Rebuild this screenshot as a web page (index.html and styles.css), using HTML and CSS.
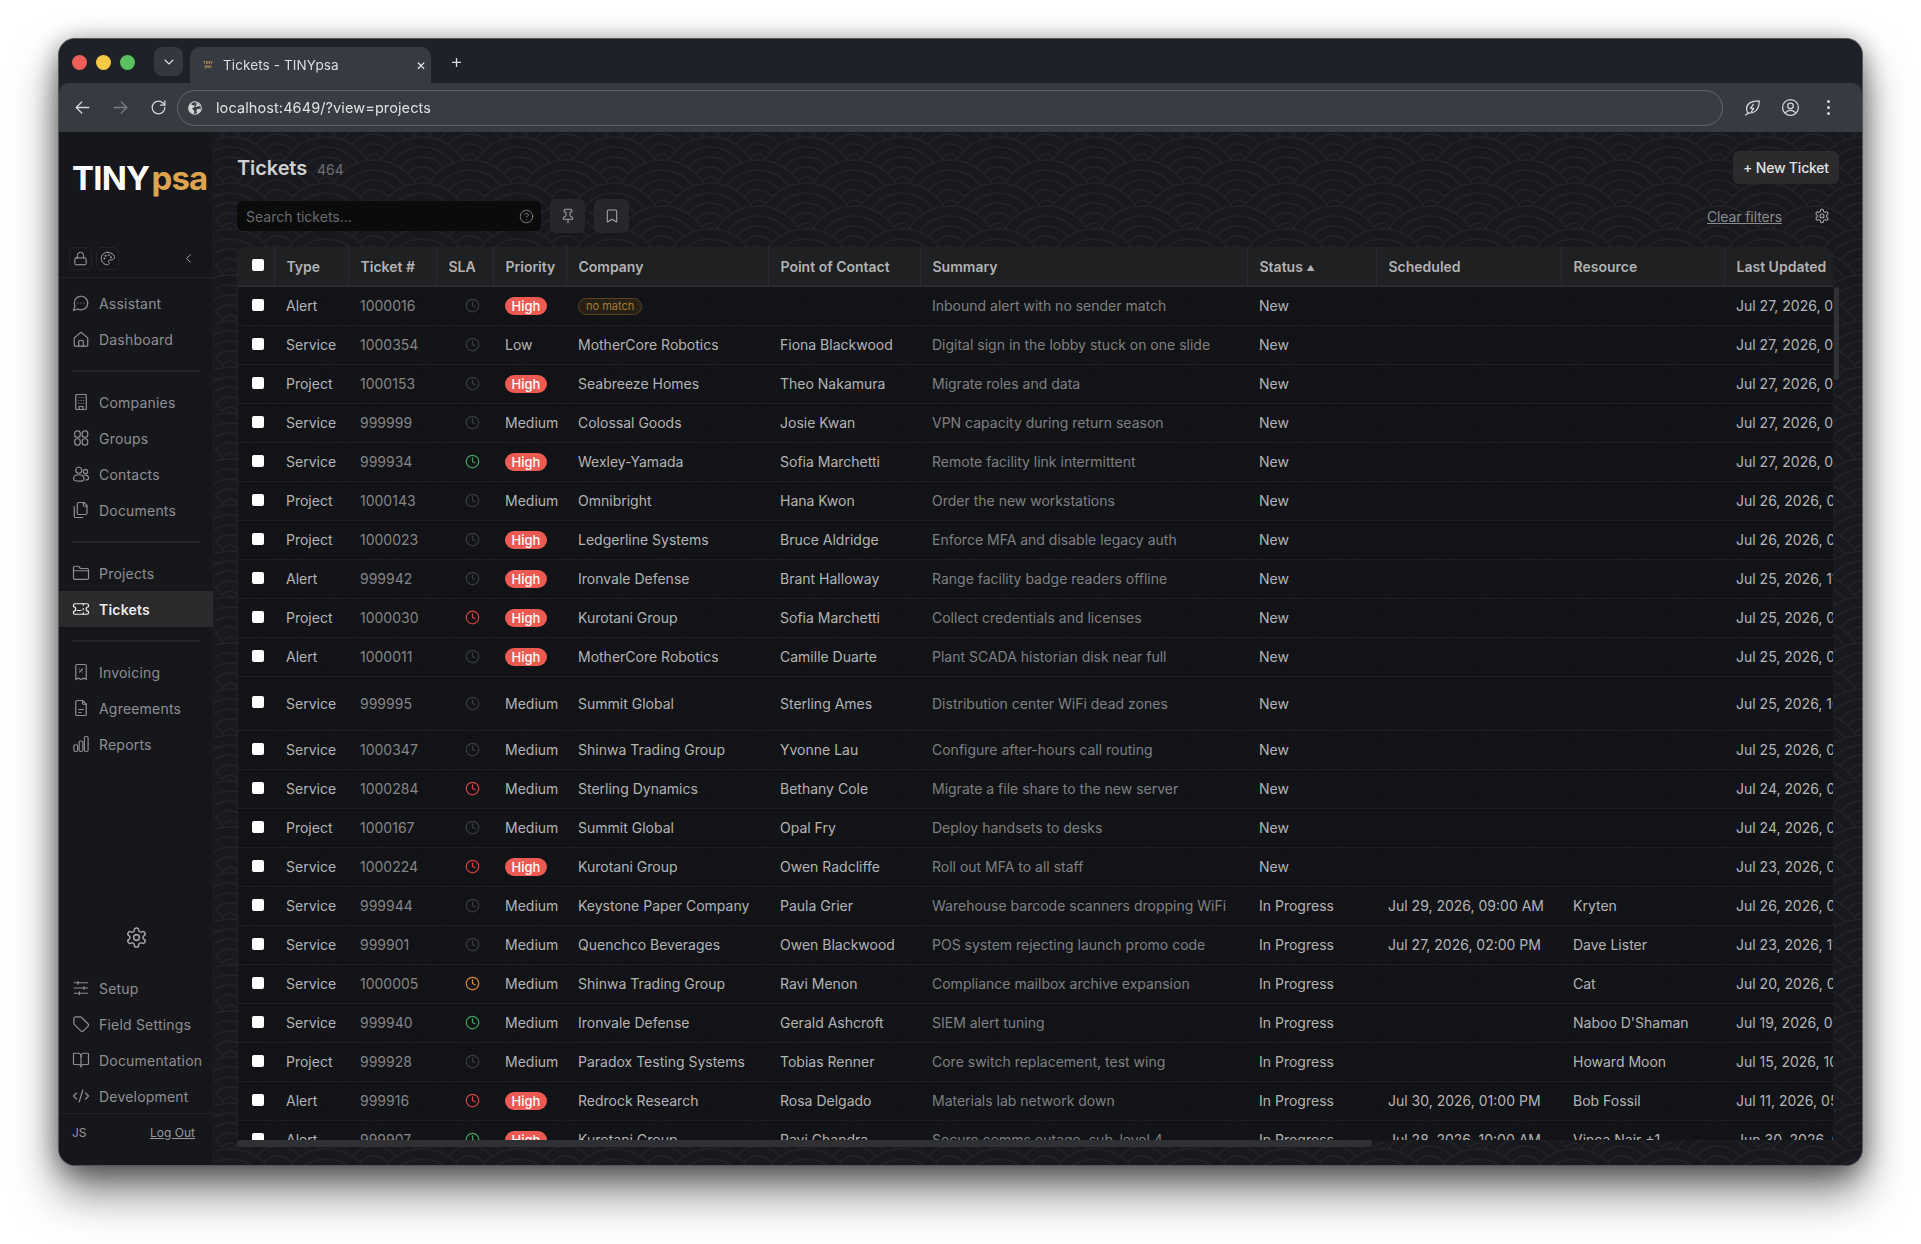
FILE: index.html
```html
<!DOCTYPE html>
<html lang="en">
<head>
<meta charset="utf-8">
<title>Tickets - TINYpsa</title>
<link rel="stylesheet" href="styles.css">
</head>
<body>
<svg class="defs" width="0" height="0" aria-hidden="true">
  <defs>
    <symbol id="i-chat" viewBox="0 0 24 24"><path d="M7.9 20A9 9 0 1 0 4 16.1L2 22Z"/><path d="M8 12h.01M12 12h.01M16 12h.01"/></symbol>
    <symbol id="i-home" viewBox="0 0 24 24"><path d="M3 10.5 12 3l9 7.5V20a1.5 1.5 0 0 1-1.5 1.5h-15A1.5 1.5 0 0 1 3 20z"/><path d="M9 21.5V15a1 1 0 0 1 1-1h4a1 1 0 0 1 1 1v6.5"/></symbol>
    <symbol id="i-building" viewBox="0 0 24 24"><rect x="5" y="2" width="14" height="20" rx="1"/><path d="M9.5 22v-4h5v4M9 6h.01M12 6h.01M15 6h.01M9 10h.01M12 10h.01M15 10h.01M9 14h.01M12 14h.01M15 14h.01"/></symbol>
    <symbol id="i-groups" viewBox="0 0 24 24"><rect x="3.5" y="2.5" width="7.5" height="8.5" rx="3.5"/><rect x="13.5" y="2.5" width="7.5" height="8.5" rx="3.5"/><rect x="3.5" y="13" width="7.5" height="8.5" rx="3.5"/><rect x="13.5" y="13" width="7.5" height="8.5" rx="3.5"/></symbol>
    <symbol id="i-users" viewBox="0 0 24 24"><circle cx="9" cy="7" r="4"/><circle cx="18" cy="8.5" r="2.8"/><path d="M2 18.5c0-3.5 3-5.5 7-5.5s7 2 7 5.5c0 2-3 3-7 3s-7-1-7-3z"/><path d="M16.5 13.5c3 0 5.5 1.3 5.5 4 0 1.4-1.5 2.3-3.8 2.5"/></symbol>
    <symbol id="i-files" viewBox="0 0 24 24"><path d="M20 7h-3a2 2 0 0 1-2-2V2"/><path d="M9 18a2 2 0 0 1-2-2V4a2 2 0 0 1 2-2h7l4 4v10a2 2 0 0 1-2 2Z"/><path d="M3 7.6v12.8A1.6 1.6 0 0 0 4.6 22h9.8"/></symbol>
    <symbol id="i-folder" viewBox="0 0 24 24"><path d="M20 20.5a2 2 0 0 0 2-2V8a2 2 0 0 0-2-2h-7.9a2 2 0 0 1-1.69-.9L9.6 3.9A2 2 0 0 0 7.93 3H4a2 2 0 0 0-2 2v13.5a2 2 0 0 0 2 2Z"/><path d="M2 9h20"/></symbol>
    <symbol id="i-ticket" viewBox="0 0 24 24"><path d="M2 9a3 3 0 0 1 0 6v2a2 2 0 0 0 2 2h16a2 2 0 0 0 2-2v-2a3 3 0 0 1 0-6V7a2 2 0 0 0-2-2H4a2 2 0 0 0-2 2Z"/><path d="M15 5v2M15 17v2M15 11v2M7 14h5"/></symbol>
    <symbol id="i-receipt" viewBox="0 0 24 24"><path d="M5 4a2 2 0 0 1 2-2h10a2 2 0 0 1 2 2v18l-3.5-1.8L12 22l-3.500-1.800L5 22z"/><path d="m10 12 4-4M10 8h.01M14 12h.01"/></symbol>
    <symbol id="i-file" viewBox="0 0 24 24"><path d="M14 2H6.500A1.500 1.500 0 0 0 5 3.500v17A1.500 1.500 0 0 0 6.500 22h11a1.500 1.500 0 0 0 1.500-1.500V7Z"/><path d="M14 2v3.500A1.500 1.500 0 0 0 15.500 7H19M9 14h6M9 18h3"/></symbol>
    <symbol id="i-bars" viewBox="0 0 24 24"><rect x="2.500" y="13" width="5" height="9" rx="2"/><rect x="9.500" y="8" width="5" height="14" rx="2"/><rect x="16.500" y="2" width="5" height="20" rx="2"/></symbol>
    <symbol id="i-gear" viewBox="0 0 24 24"><path d="M12.220 2h-.44a2 2 0 0 0-2 2v.18a2 2 0 0 1-1 1.730l-.43.25a2 2 0 0 1-2 0l-.15-.08a2 2 0 0 0-2.730.73l-.22.38a2 2 0 0 0 .73 2.730l.15.1a2 2 0 0 1 1 1.720v.51a2 2 0 0 1-1 1.740l-.15.09a2 2 0 0 0-.73 2.730l.22.38a2 2 0 0 0 2.730.73l.15-.08a2 2 0 0 1 2 0l.43.25a2 2 0 0 1 1 1.730V20a2 2 0 0 0 2 2h.44a2 2 0 0 0 2-2v-.18a2 2 0 0 1 1-1.730l.43-.25a2 2 0 0 1 2 0l.15.08a2 2 0 0 0 2.730-.73l.22-.39a2 2 0 0 0-.73-2.730l-.15-.08a2 2 0 0 1-1-1.740v-.5a2 2 0 0 1 1-1.740l.15-.09a2 2 0 0 0 .73-2.730l-.22-.38a2 2 0 0 0-2.730-.73l-.15.08a2 2 0 0 1-2 0l-.43-.25a2 2 0 0 1-1-1.730V4a2 2 0 0 0-2-2z"/><circle cx="12" cy="12" r="3"/></symbol>
    <symbol id="i-sliders" viewBox="0 0 24 24"><path d="M3 5h18M3 12h18M3 19h18M8 3v4M16 10v4M10 17v4"/></symbol>
    <symbol id="i-tag" viewBox="0 0 24 24"><path d="M11 2.500H5A2.500 2.500 0 0 0 2.500 5v6c0 .7.3 1.300.8 1.800l8.400 8.400a2.500 2.500 0 0 0 3.500 0l6-6a2.500 2.500 0 0 0 0-3.500l-8.400-8.400a2.500 2.500 0 0 0-1.800-.8z"/></symbol>
    <symbol id="i-book" viewBox="0 0 24 24"><path d="M12 7v14"/><path d="M3 18a1 1 0 0 1-1-1V4a1 1 0 0 1 1-1h5a4 4 0 0 1 4 4 4 4 0 0 1 4-4h5a1 1 0 0 1 1 1v13a1 1 0 0 1-1 1h-6a3 3 0 0 0-3 3 3 3 0 0 0-3-3z"/></symbol>
    <symbol id="i-code" viewBox="0 0 24 24"><path d="m18 16 4-4-4-4M6 8l-4 4 4 4M14.500 4l-5 16"/></symbol>
    <symbol id="i-lock" viewBox="0 0 24 24"><rect x="3" y="11" width="18" height="11" rx="2"/><path d="M7 11V7a5 5 0 0 1 10 0v4"/></symbol>
    <symbol id="i-palette" viewBox="0 0 24 24"><path d="M12 2C6.500 2 2 6.500 2 12s4.500 10 10 10c1.500 0 2.500-1 2.500-2.300 0-.6-.2-1.100-.6-1.600-.4-.5-.6-1-.6-1.600 0-1.300 1-2.200 2.300-2.200h2.300c3 0 5.600-2.500 5.600-5.500C22 5.900 17.500 2 12 2z"/><path d="M7 12h.01M9 7.500h.01M14 6.500h.01M17.500 10h.01" stroke-width="3"/></symbol>
    <symbol id="i-left" viewBox="0 0 24 24"><path d="m15 18-6-6 6-6"/></symbol>
    <symbol id="i-pin" viewBox="0 0 24 24"><path d="M12 17v5"/><path d="M9 10.760a2 2 0 0 1-1.110 1.790l-1.780.9A2 2 0 0 0 5 15.240V16a1 1 0 0 0 1 1h12a1 1 0 0 0 1-1v-.76a2 2 0 0 0-1.110-1.790l-1.780-.9A2 2 0 0 1 15 10.760V7a1 1 0 0 1 1-1 2 2 0 0 0 0-4H8a2 2 0 0 0 0 4 1 1 0 0 1 1 1z"/></symbol>
    <symbol id="i-bookmark" viewBox="0 0 24 24"><path d="m19 21-7-4-7 4V5a2 2 0 0 1 2-2h10a2 2 0 0 1 2 2v16z"/></symbol>
    <symbol id="i-help" viewBox="0 0 24 24"><circle cx="12" cy="12" r="10"/><path d="M9.090 9a3 3 0 0 1 5.830 1c0 2-3 3-3 3M12 17h.01"/></symbol>
    <symbol id="i-clock" viewBox="0 0 24 24"><circle cx="12" cy="12" r="10"/><path d="M12 6v6l4 2"/></symbol>
    <symbol id="i-back" viewBox="0 0 24 24"><path d="m11 19-7-7 7-7M4 12h16"/></symbol>
    <symbol id="i-fwd" viewBox="0 0 24 24"><path d="m13 5 7 7-7 7M20 12H4"/></symbol>
    <symbol id="i-reload" viewBox="0 0 24 24"><path d="M20 12a8 8 0 1 1-8-8c2.300 0 4.400 1 6 2.600L20 9"/><path d="M20 3.500V9h-5.500"/></symbol>
    <symbol id="i-down" viewBox="0 0 24 24"><path d="m6 9 6 6 6-6"/></symbol>
    <symbol id="i-globe" viewBox="0 0 24 24"><circle cx="12" cy="12" r="9.500"/><path class="solid" d="M5 6c2 .5 3 2 5 2s2 2 1 3-3 0-3 2 3 2 3 4-.5 3-1.500 3.500C6 19 3 16 3 12c0-2.500.8-4.500 2-6zM14 4c2 .5 5 2.500 6 5-1.500 1-3 0-4 .5s-2 2-3 .5 1.500-2 1.500-3-1-1-.5-3zM15 14c1.500-.8 4-1 5.500-.5-.5 3-2.500 5.500-5 6.500-1-1-2-4.500-.5-6z"/></symbol>
    <symbol id="i-leaf" viewBox="0 0 24 24"><path d="M20.500 3.500C13 3.500 5 5 4.500 13c-.2 2.500.7 4.500 2 6 8 .5 14-3.500 14-15.500z"/><path d="M6.500 19 3.500 21.500M13 8l-3.500 5h4L10.500 17.500"/></symbol>
    <symbol id="i-user" viewBox="0 0 24 24"><circle cx="12" cy="12" r="10"/><circle cx="12" cy="10" r="3.500"/><path d="M5.500 19.500c1-2.500 3.500-4 6.500-4s5.500 1.500 6.500 4"/></symbol>
  </defs>
</svg>

<div class="window">
  <div class="tabbar">
    <div class="lights"><span class="light red"></span><span class="light yellow"></span><span class="light green"></span></div>
    <div class="tab-menu"><svg class="ico ico-16"><use href="#i-down"/></svg></div>
    <div class="tab">
      <span class="favicon">TINY<br>psa</span>
      <span class="tab-title">Tickets - TINYpsa</span>
      <span class="tab-close">✕</span>
    </div>
    <span class="tab-new">+</span>
  </div>
  <div class="toolbar">
    <svg class="ico nav-arrow"><use href="#i-back"/></svg>
    <svg class="ico nav-arrow dim"><use href="#i-fwd"/></svg>
    <svg class="ico nav-arrow"><use href="#i-reload"/></svg>
    <div class="omnibox">
      <svg class="ico ico-16"><use href="#i-globe"/></svg>
      <span class="url">localhost:4649/?view=projects</span>
    </div>
    <svg class="ico chrome-ico"><use href="#i-leaf"/></svg>
    <svg class="ico chrome-ico"><use href="#i-user"/></svg>
    <span class="dots"><i></i><i></i><i></i></span>
  </div>

  <div class="app">
    <aside class="sidebar">
      <div class="logo"><span class="logo-a">TINY</span><span class="logo-b">psa</span></div>
      <div class="side-tools">
        <span class="tool-btn"><svg class="ico ico-14"><use href="#i-lock"/></svg></span>
        <span class="tool-btn"><svg class="ico ico-14"><use href="#i-palette"/></svg></span>
        <svg class="ico ico-14 collapse"><use href="#i-left"/></svg>
      </div>
      <nav class="nav nav-first">
        <a class="nav-item"><svg class="ico"><use href="#i-chat"/></svg>Assistant</a>
        <a class="nav-item"><svg class="ico"><use href="#i-home"/></svg>Dashboard</a>
      </nav>
      <hr class="nav-rule">
      <nav class="nav">
        <a class="nav-item"><svg class="ico"><use href="#i-building"/></svg>Companies</a>
        <a class="nav-item"><svg class="ico"><use href="#i-groups"/></svg>Groups</a>
        <a class="nav-item"><svg class="ico"><use href="#i-users"/></svg>Contacts</a>
        <a class="nav-item"><svg class="ico"><use href="#i-files"/></svg>Documents</a>
      </nav>
      <hr class="nav-rule">
      <nav class="nav">
        <a class="nav-item"><svg class="ico"><use href="#i-folder"/></svg>Projects</a>
        <a class="nav-item active"><svg class="ico"><use href="#i-ticket"/></svg>Tickets</a>
      </nav>
      <hr class="nav-rule">
      <nav class="nav">
        <a class="nav-item"><svg class="ico"><use href="#i-receipt"/></svg>Invoicing</a>
        <a class="nav-item"><svg class="ico"><use href="#i-file"/></svg>Agreements</a>
        <a class="nav-item"><svg class="ico"><use href="#i-bars"/></svg>Reports</a>
      </nav>
      <div class="side-gear"><svg class="ico ico-22"><use href="#i-gear"/></svg></div>
      <nav class="nav">
        <a class="nav-item"><svg class="ico"><use href="#i-sliders"/></svg>Setup</a>
        <a class="nav-item"><svg class="ico"><use href="#i-tag"/></svg>Field Settings</a>
        <a class="nav-item"><svg class="ico"><use href="#i-book"/></svg>Documentation</a>
        <a class="nav-item"><svg class="ico"><use href="#i-code"/></svg>Development</a>
      </nav>
      <div class="side-foot"><span>JS</span><a class="logout">Log Out</a></div>
    </aside>

    <main class="main">
      <svg class="pattern" aria-hidden="true">
        <defs>
          <g id="scale" class="scale">
            <circle r="48"/><circle r="38"/><circle r="28"/><circle r="18"/><circle r="8"/>
          </g>
          <pattern id="waves" width="96" height="46" patternUnits="userSpaceOnUse" patternTransform="translate(16 7)">
            <use href="#scale" x="0" y="0"/><use href="#scale" x="96" y="0"/>
            <use href="#scale" x="48" y="23"/>
            <use href="#scale" x="0" y="46"/><use href="#scale" x="96" y="46"/>
            <use href="#scale" x="48" y="69"/>
            <use href="#scale" x="0" y="92"/><use href="#scale" x="96" y="92"/>
          </pattern>
        </defs>
        <rect width="100%" height="100%" fill="url(#waves)"/>
      </svg>

      <div class="content">
        <header class="head">
          <div class="head-title"><h1>Tickets</h1><span class="count">464</span></div>
          <button class="new-btn">+ New Ticket</button>
        </header>
        <div class="filters">
          <div class="search">
            <span class="placeholder">Search tickets...</span>
            <svg class="ico ico-15"><use href="#i-help"/></svg>
          </div>
          <span class="icon-btn"><svg class="ico ico-16"><use href="#i-pin"/></svg></span>
          <span class="icon-btn"><svg class="ico ico-16"><use href="#i-bookmark"/></svg></span>
          <a class="clear">Clear filters</a>
          <svg class="ico ico-16 filter-gear"><use href="#i-gear"/></svg>
        </div>

        <div class="table-area">
          <div class="table-clip">
            <table class="grid">
              <colgroup>
                <col class="c-check"><col class="c-type"><col class="c-num"><col class="c-sla"><col class="c-pri"><col class="c-co"><col class="c-poc"><col class="c-sum"><col class="c-st"><col class="c-sch"><col class="c-res"><col class="c-upd">
              </colgroup>
              <thead>
                <tr>
                  <th class="check"><input type="checkbox" class="cb"></th><th>Type</th><th>Ticket #</th><th>SLA</th><th>Priority</th><th>Company</th><th>Point of Contact</th><th>Summary</th><th>Status <span class="sort">▲</span></th><th>Scheduled</th><th>Resource</th><th>Last Updated</th>
                </tr>
              </thead>
              <tbody>
                <tr><td class="check"><input type="checkbox" class="cb"></td><td>Alert</td><td class="num">1000016</td><td class="sla"><svg class="ico clock"><use href="#i-clock"/></svg></td><td><span class="high">High</span></td><td><span class="nomatch">no match</span></td><td></td><td class="sum">Inbound alert with no sender match</td><td>New</td><td></td><td></td><td>Jul 27, 2026, 09:41 AM</td></tr>
                <tr><td class="check"><input type="checkbox" class="cb"></td><td>Service</td><td class="num">1000354</td><td class="sla"><svg class="ico clock"><use href="#i-clock"/></svg></td><td>Low</td><td>MotherCore Robotics</td><td>Fiona Blackwood</td><td class="sum">Digital sign in the lobby stuck on one slide</td><td>New</td><td></td><td></td><td>Jul 27, 2026, 06:12 AM</td></tr>
                <tr><td class="check"><input type="checkbox" class="cb"></td><td>Project</td><td class="num">1000153</td><td class="sla"><svg class="ico clock"><use href="#i-clock"/></svg></td><td><span class="high">High</span></td><td>Seabreeze Homes</td><td>Theo Nakamura</td><td class="sum">Migrate roles and data</td><td>New</td><td></td><td></td><td>Jul 27, 2026, 06:08 AM</td></tr>
                <tr><td class="check"><input type="checkbox" class="cb"></td><td>Service</td><td class="num">999999</td><td class="sla"><svg class="ico clock"><use href="#i-clock"/></svg></td><td>Medium</td><td>Colossal Goods</td><td>Josie Kwan</td><td class="sum">VPN capacity during return season</td><td>New</td><td></td><td></td><td>Jul 27, 2026, 06:02 AM</td></tr>
                <tr><td class="check"><input type="checkbox" class="cb"></td><td>Service</td><td class="num">999934</td><td class="sla"><svg class="ico clock ok"><use href="#i-clock"/></svg></td><td><span class="high">High</span></td><td>Wexley-Yamada</td><td>Sofia Marchetti</td><td class="sum">Remote facility link intermittent</td><td>New</td><td></td><td></td><td>Jul 27, 2026, 06:00 AM</td></tr>
                <tr><td class="check"><input type="checkbox" class="cb"></td><td>Project</td><td class="num">1000143</td><td class="sla"><svg class="ico clock"><use href="#i-clock"/></svg></td><td>Medium</td><td>Omnibright</td><td>Hana Kwon</td><td class="sum">Order the new workstations</td><td>New</td><td></td><td></td><td>Jul 26, 2026, 03:30 PM</td></tr>
                <tr><td class="check"><input type="checkbox" class="cb"></td><td>Project</td><td class="num">1000023</td><td class="sla"><svg class="ico clock"><use href="#i-clock"/></svg></td><td><span class="high">High</span></td><td>Ledgerline Systems</td><td>Bruce Aldridge</td><td class="sum">Enforce MFA and disable legacy auth</td><td>New</td><td></td><td></td><td>Jul 26, 2026, 09:15 AM</td></tr>
                <tr><td class="check"><input type="checkbox" class="cb"></td><td>Alert</td><td class="num">999942</td><td class="sla"><svg class="ico clock"><use href="#i-clock"/></svg></td><td><span class="high">High</span></td><td>Ironvale Defense</td><td>Brant Halloway</td><td class="sum">Range facility badge readers offline</td><td>New</td><td></td><td></td><td>Jul 25, 2026, 11:04 PM</td></tr>
                <tr><td class="check"><input type="checkbox" class="cb"></td><td>Project</td><td class="num">1000030</td><td class="sla"><svg class="ico clock bad"><use href="#i-clock"/></svg></td><td><span class="high">High</span></td><td>Kurotani Group</td><td>Sofia Marchetti</td><td class="sum">Collect credentials and licenses</td><td>New</td><td></td><td></td><td>Jul 25, 2026, 07:22 PM</td></tr>
                <tr><td class="check"><input type="checkbox" class="cb"></td><td>Alert</td><td class="num">1000011</td><td class="sla"><svg class="ico clock"><use href="#i-clock"/></svg></td><td><span class="high">High</span></td><td>MotherCore Robotics</td><td>Camille Duarte</td><td class="sum">Plant SCADA historian disk near full</td><td>New</td><td></td><td></td><td>Jul 25, 2026, 03:47 PM</td></tr>
                <tr class="tall"><td class="check"><input type="checkbox" class="cb"></td><td>Service</td><td class="num">999995</td><td class="sla"><svg class="ico clock"><use href="#i-clock"/></svg></td><td>Medium</td><td>Summit Global</td><td>Sterling Ames</td><td class="sum">Distribution center WiFi dead zones</td><td>New</td><td></td><td></td><td>Jul 25, 2026, 10:18 AM</td></tr>
                <tr><td class="check"><input type="checkbox" class="cb"></td><td>Service</td><td class="num">1000347</td><td class="sla"><svg class="ico clock"><use href="#i-clock"/></svg></td><td>Medium</td><td>Shinwa Trading Group</td><td>Yvonne Lau</td><td class="sum">Configure after-hours call routing</td><td>New</td><td></td><td></td><td>Jul 25, 2026, 04:09 AM</td></tr>
                <tr><td class="check"><input type="checkbox" class="cb"></td><td>Service</td><td class="num">1000284</td><td class="sla"><svg class="ico clock bad"><use href="#i-clock"/></svg></td><td>Medium</td><td>Sterling Dynamics</td><td>Bethany Cole</td><td class="sum">Migrate a file share to the new server</td><td>New</td><td></td><td></td><td>Jul 24, 2026, 06:33 PM</td></tr>
                <tr><td class="check"><input type="checkbox" class="cb"></td><td>Project</td><td class="num">1000167</td><td class="sla"><svg class="ico clock"><use href="#i-clock"/></svg></td><td>Medium</td><td>Summit Global</td><td>Opal Fry</td><td class="sum">Deploy handsets to desks</td><td>New</td><td></td><td></td><td>Jul 24, 2026, 01:51 PM</td></tr>
                <tr><td class="check"><input type="checkbox" class="cb"></td><td>Service</td><td class="num">1000224</td><td class="sla"><svg class="ico clock bad"><use href="#i-clock"/></svg></td><td><span class="high">High</span></td><td>Kurotani Group</td><td>Owen Radcliffe</td><td class="sum">Roll out MFA to all staff</td><td>New</td><td></td><td></td><td>Jul 23, 2026, 07:26 AM</td></tr>
                <tr><td class="check"><input type="checkbox" class="cb"></td><td>Service</td><td class="num">999944</td><td class="sla"><svg class="ico clock"><use href="#i-clock"/></svg></td><td>Medium</td><td>Keystone Paper Company</td><td>Paula Grier</td><td class="sum">Warehouse barcode scanners dropping WiFi</td><td>In Progress</td><td>Jul 29, 2026, 09:00 AM</td><td>Kryten</td><td>Jul 26, 2026, 05:14 PM</td></tr>
                <tr><td class="check"><input type="checkbox" class="cb"></td><td>Service</td><td class="num">999901</td><td class="sla"><svg class="ico clock"><use href="#i-clock"/></svg></td><td>Medium</td><td>Quenchco Beverages</td><td>Owen Blackwood</td><td class="sum">POS system rejecting launch promo code</td><td>In Progress</td><td>Jul 27, 2026, 02:00 PM</td><td>Dave Lister</td><td>Jul 23, 2026, 11:29 AM</td></tr>
                <tr><td class="check"><input type="checkbox" class="cb"></td><td>Service</td><td class="num">1000005</td><td class="sla"><svg class="ico clock warn"><use href="#i-clock"/></svg></td><td>Medium</td><td>Shinwa Trading Group</td><td>Ravi Menon</td><td class="sum">Compliance mailbox archive expansion</td><td>In Progress</td><td></td><td>Cat</td><td>Jul 20, 2026, 01:37 PM</td></tr>
                <tr><td class="check"><input type="checkbox" class="cb"></td><td>Service</td><td class="num">999940</td><td class="sla"><svg class="ico clock ok"><use href="#i-clock"/></svg></td><td>Medium</td><td>Ironvale Defense</td><td>Gerald Ashcroft</td><td class="sum">SIEM alert tuning</td><td>In Progress</td><td></td><td>Naboo D'Shaman</td><td>Jul 19, 2026, 06:05 PM</td></tr>
                <tr><td class="check"><input type="checkbox" class="cb"></td><td>Project</td><td class="num">999928</td><td class="sla"><svg class="ico clock"><use href="#i-clock"/></svg></td><td>Medium</td><td>Paradox Testing Systems</td><td>Tobias Renner</td><td class="sum">Core switch replacement, test wing</td><td>In Progress</td><td></td><td>Howard Moon</td><td>Jul 15, 2026, 10:52 AM</td></tr>
                <tr><td class="check"><input type="checkbox" class="cb"></td><td>Alert</td><td class="num">999916</td><td class="sla"><svg class="ico clock bad"><use href="#i-clock"/></svg></td><td><span class="high">High</span></td><td>Redrock Research</td><td>Rosa Delgado</td><td class="sum">Materials lab network down</td><td>In Progress</td><td>Jul 30, 2026, 01:00 PM</td><td>Bob Fossil</td><td>Jul 11, 2026, 05:17 PM</td></tr>
                <tr><td class="check"><input type="checkbox" class="cb"></td><td>Alert</td><td class="num">999907</td><td class="sla"><svg class="ico clock ok"><use href="#i-clock"/></svg></td><td><span class="high">High</span></td><td>Kurotani Group</td><td>Ravi Chandra</td><td class="sum">Secure comms outage, sub-level 4</td><td>In Progress</td><td>Jul 28, 2026, 10:00 AM</td><td>Vinca Nair +1</td><td>Jun 30, 2026, 02:44 PM</td></tr>
              </tbody>
            </table>
          </div>
          <span class="vthumb"></span>
          <span class="hthumb"></span>
        </div>
      </div>
    </main>
  </div>
</div>
</body>
</html>
```

FILE: styles.css
```css
* { box-sizing: border-box; }
html, body { margin: 0; height: 1244px; overflow: hidden; background: #fff; }
body { padding: 39px 59px 0; font-family: Inter, "Liberation Sans", sans-serif; font-size: 14px; }
.defs { position: absolute; }

.ico { width: 18px; height: 18px; fill: none; stroke: currentColor; stroke-width: 1.6; stroke-linecap: round; stroke-linejoin: round; flex: none; display: block; }
.ico-14 { width: 15px; height: 15px; }
.ico-15 { width: 15px; height: 15px; }
.ico-16 { width: 16px; height: 16px; }
.ico-22 { width: 23px; height: 23px; }
.solid { fill: currentColor; stroke: none; }

.window {
  width: 1803px; height: 1126px; border-radius: 16px; overflow: hidden;
  display: flex; flex-direction: column; background: #1e2128;
  box-shadow: 0 0 0 1px #55565a, 0 26px 46px rgba(0,0,0,.55), 0 4px 26px rgba(0,0,0,.45);
  filter: blur(.45px);
}

/* browser chrome */
.tabbar { height: 44px; display: flex; align-items: flex-end; padding-left: 13px; background: #1e2128; color: #dcdde0; flex: none; }
.lights { display: flex; gap: 9px; align-self: flex-start; margin-top: 15.5px; }
.light { width: 15px; height: 15px; border-radius: 50%; }
.red { background: #ee5f5b; }
.yellow { background: #f6c944; }
.green { background: #5cc261; }
.tab-menu { width: 29px; height: 29px; margin: 0 7px 7px 19px; border-radius: 8px; background: #34373e; display: flex; align-items: center; justify-content: center; align-self: flex-end; color: #d5dcf0; }
.tab { width: 241px; height: 36px; background: #383a41; border-radius: 10px 10px 0 0; display: flex; align-items: center; padding: 0 0 0 12px; margin-bottom: 0; font-size: 13.5px; }
.favicon { width: 12px; font-size: 4px; line-height: 4px; color: #b89455; font-weight: 700; text-align: center; margin-right: 9px; }
.tab-title { flex: 1; letter-spacing: .1px; }
.tab-close { font-size: 12px; margin-right: 5px; color: #e6e7ea; }
.tab-new { font-size: 20px; font-weight: 300; margin: 0 0 9px 19px; line-height: 26px; }

.toolbar { height: 49px; background: #383a41; display: flex; align-items: center; color: #d5d6d9; flex: none; border-radius: 10px 10px 0 0; }
.nav-arrow { width: 19px; height: 19px; margin-left: 14px; margin-right: 5px; }
.nav-arrow.dim { color: #7a7c81; margin-left: 14px; }
.nav-arrow + .nav-arrow + .nav-arrow { margin-left: 14px; margin-right: 4px; }
.omnibox { width: 1546px; height: 36px; border: 1px solid #66676b; border-radius: 18px; margin-left: 5px; background: #3a3c43; display: flex; align-items: center; padding-left: 9px; }
.url { margin-left: 13px; font-size: 14.5px; color: #dfe0e3; letter-spacing: .1px; }
.chrome-ico { width: 19px; height: 19px; margin-left: 19px; }
.omnibox + .chrome-ico { margin-left: 20px; }
.dots { display: flex; flex-direction: column; gap: 3px; margin-left: 27px; }
.dots i { width: 3px; height: 3px; border-radius: 50%; background: #d5d6d9; display: block; }

/* app */
.app { flex: 1; display: flex; min-height: 0; }
.sidebar { width: 155px; background: #16171b; border-right: 1px solid #1d1e22; display: flex; flex-direction: column; color: #8e8f92; flex: none; }
.logo { height: 115px; padding: 26px 0 0 13px; font-size: 33px; line-height: 40px; font-weight: 700; letter-spacing: -.8px; }
.logo-a { color: #fff; }
.logo-b { color: #dca44e; margin-left: 2px; }
.side-tools { height: 31px; padding: 0 0 7px 10px; display: flex; align-items: center; gap: 4px; border-bottom: 1px solid #232428; color: #a2a3a6; }
.tool-btn { width: 23px; height: 23px; border: 1px solid #222327; border-radius: 5px; display: flex; align-items: center; justify-content: center; }
.collapse { margin-left: auto; margin-right: 17px; }
.nav { display: flex; flex-direction: column; }
.nav-first { margin-top: 7px; }
.nav-item { height: 36px; display: flex; align-items: center; gap: 9px; padding-left: 13px; font-size: 14px; letter-spacing: .2px; color: #8e8f92; }
.nav-item.active { background: #2b2b2d; color: #ebebec; font-weight: 600; }
.nav-rule { height: 2px; border: 0; background: #24252a; margin: 13px 13px 12px; flex: none; }
.side-gear { margin-top: auto; margin-bottom: 21px; display: flex; justify-content: center; color: #a0a1a4; }
.side-foot { height: 52px; border-top: 1px solid #1f2024; margin-top: -1px; padding: 0 18px 15px 13px; display: flex; align-items: center; justify-content: space-between; font-size: 12px; color: #97989b; }
.logout { text-decoration: underline; }

.main { flex: 1; position: relative; background: #18191e; min-width: 0; }
.pattern { position: absolute; inset: 0; width: 100%; height: 100%; }
.scale circle { fill: none; stroke: #212328; stroke-width: 1.4; }
.scale circle:first-child { fill: #18191e; }
.content { position: relative; height: 100%; padding: 19px 23px 17px; display: flex; flex-direction: column; }

.head { display: flex; justify-content: space-between; align-items: center; height: 33px; }
.head-title { display: flex; align-items: baseline; gap: 10px; }
h1 { margin: 0; font-size: 20px; font-weight: 600; color: #d0d0d1; letter-spacing: -.1px; }
.count { font-size: 14px; color: #6d6e71; }
.new-btn { height: 33px; width: 106px; border: 0; border-radius: 6px; background: #2b2b2d; color: #e0e0e1; font: 500 14px Inter, "Liberation Sans", sans-serif; letter-spacing: -.2px; padding: 0; }

.filters { display: flex; align-items: center; height: 34px; margin-top: 15px; }
.search { width: 304px; height: 30px; background: #0a0b0b; border-radius: 6px; display: flex; align-items: center; justify-content: space-between; padding: 0 7px 0 9px; color: #77787b; }
.placeholder { font-size: 14px; color: #6b6c6e; }
.icon-btn { width: 35px; height: 34px; border-radius: 6px; background: #26272a; display: flex; align-items: center; justify-content: center; color: #a3a4a6; margin-left: 9px; }
.clear { margin-left: auto; font-size: 14px; color: #8a8b8d; text-decoration: underline; letter-spacing: -.1px; }
.filter-gear { margin: 0 9px 0 32px; color: #a9aaac; }

.table-area { position: relative; margin-top: 14px; height: 900px; }
.table-clip { width: 1596px; height: 893px; overflow: hidden; border-radius: 8px 8px 0 0; border-left: 1px solid #222327; background: rgba(16,17,20,.8); }
.grid { width: 1640px; table-layout: fixed; border-collapse: collapse; color: #b4b4b5; font-size: 14px; }
.c-check { width: 36px; } .c-type { width: 74px; } .c-num { width: 88px; } .c-sla { width: 57px; } .c-pri { width: 73px; } .c-co { width: 202px; } .c-poc { width: 152px; } .c-sum { width: 327px; } .c-st { width: 129px; } .c-sch { width: 185px; } .c-res { width: 163px; } .c-upd { width: 154px; }
.grid th { height: 39px; padding: 0 0 0 12px; background: #1f2022; border-right: 1px solid #2a2b2e; border-bottom: 2px solid #2a2b2d; font-weight: 600; text-align: left; color: #b2b2b3; white-space: nowrap; overflow: hidden; }
.grid th:last-child { border-right: 0; }
.grid td { height: 39px; padding: 0 0 0 12px; border-bottom: 1px solid #1e1f22; white-space: nowrap; overflow: hidden; }
.grid .check { padding: 0 0 2px 14px; }
.grid .tall td { height: 54px; }
.cb { appearance: none; display: block; width: 12px; height: 12px; margin: 0; background: #fff; border-radius: 2px; }
.num { color: #858587; }
.sum { color: #7f8082; }
.sla .clock { margin-left: 17px; }
.clock { width: 15px; height: 15px; color: #3a3c41; stroke-width: 2; }
.ok { color: #3da35d; }
.bad { color: #d2433f; }
.warn { color: #dd8a34; }
.high { display: inline-block; height: 18px; width: 42px; line-height: 18px; text-align: center; border-radius: 9px; background: #ec5a51; color: #fff; font-size: 13px; font-weight: 500; }
.nomatch { display: inline-block; height: 17px; line-height: 15px; padding: 0 7px; border: 1px solid #5a4420; border-radius: 9px; background: #272016; color: #a67a2e; font-size: 11px; }
.sort { font-size: 8px; vertical-align: 1px; }
.vthumb { position: absolute; left: 1597px; top: 40px; width: 5px; height: 93px; border-radius: 3px; background: #303134; }
.hthumb { position: absolute; left: 0; top: 893px; width: 1135px; height: 7px; border-radius: 3px; background: #2f3033; }
```
